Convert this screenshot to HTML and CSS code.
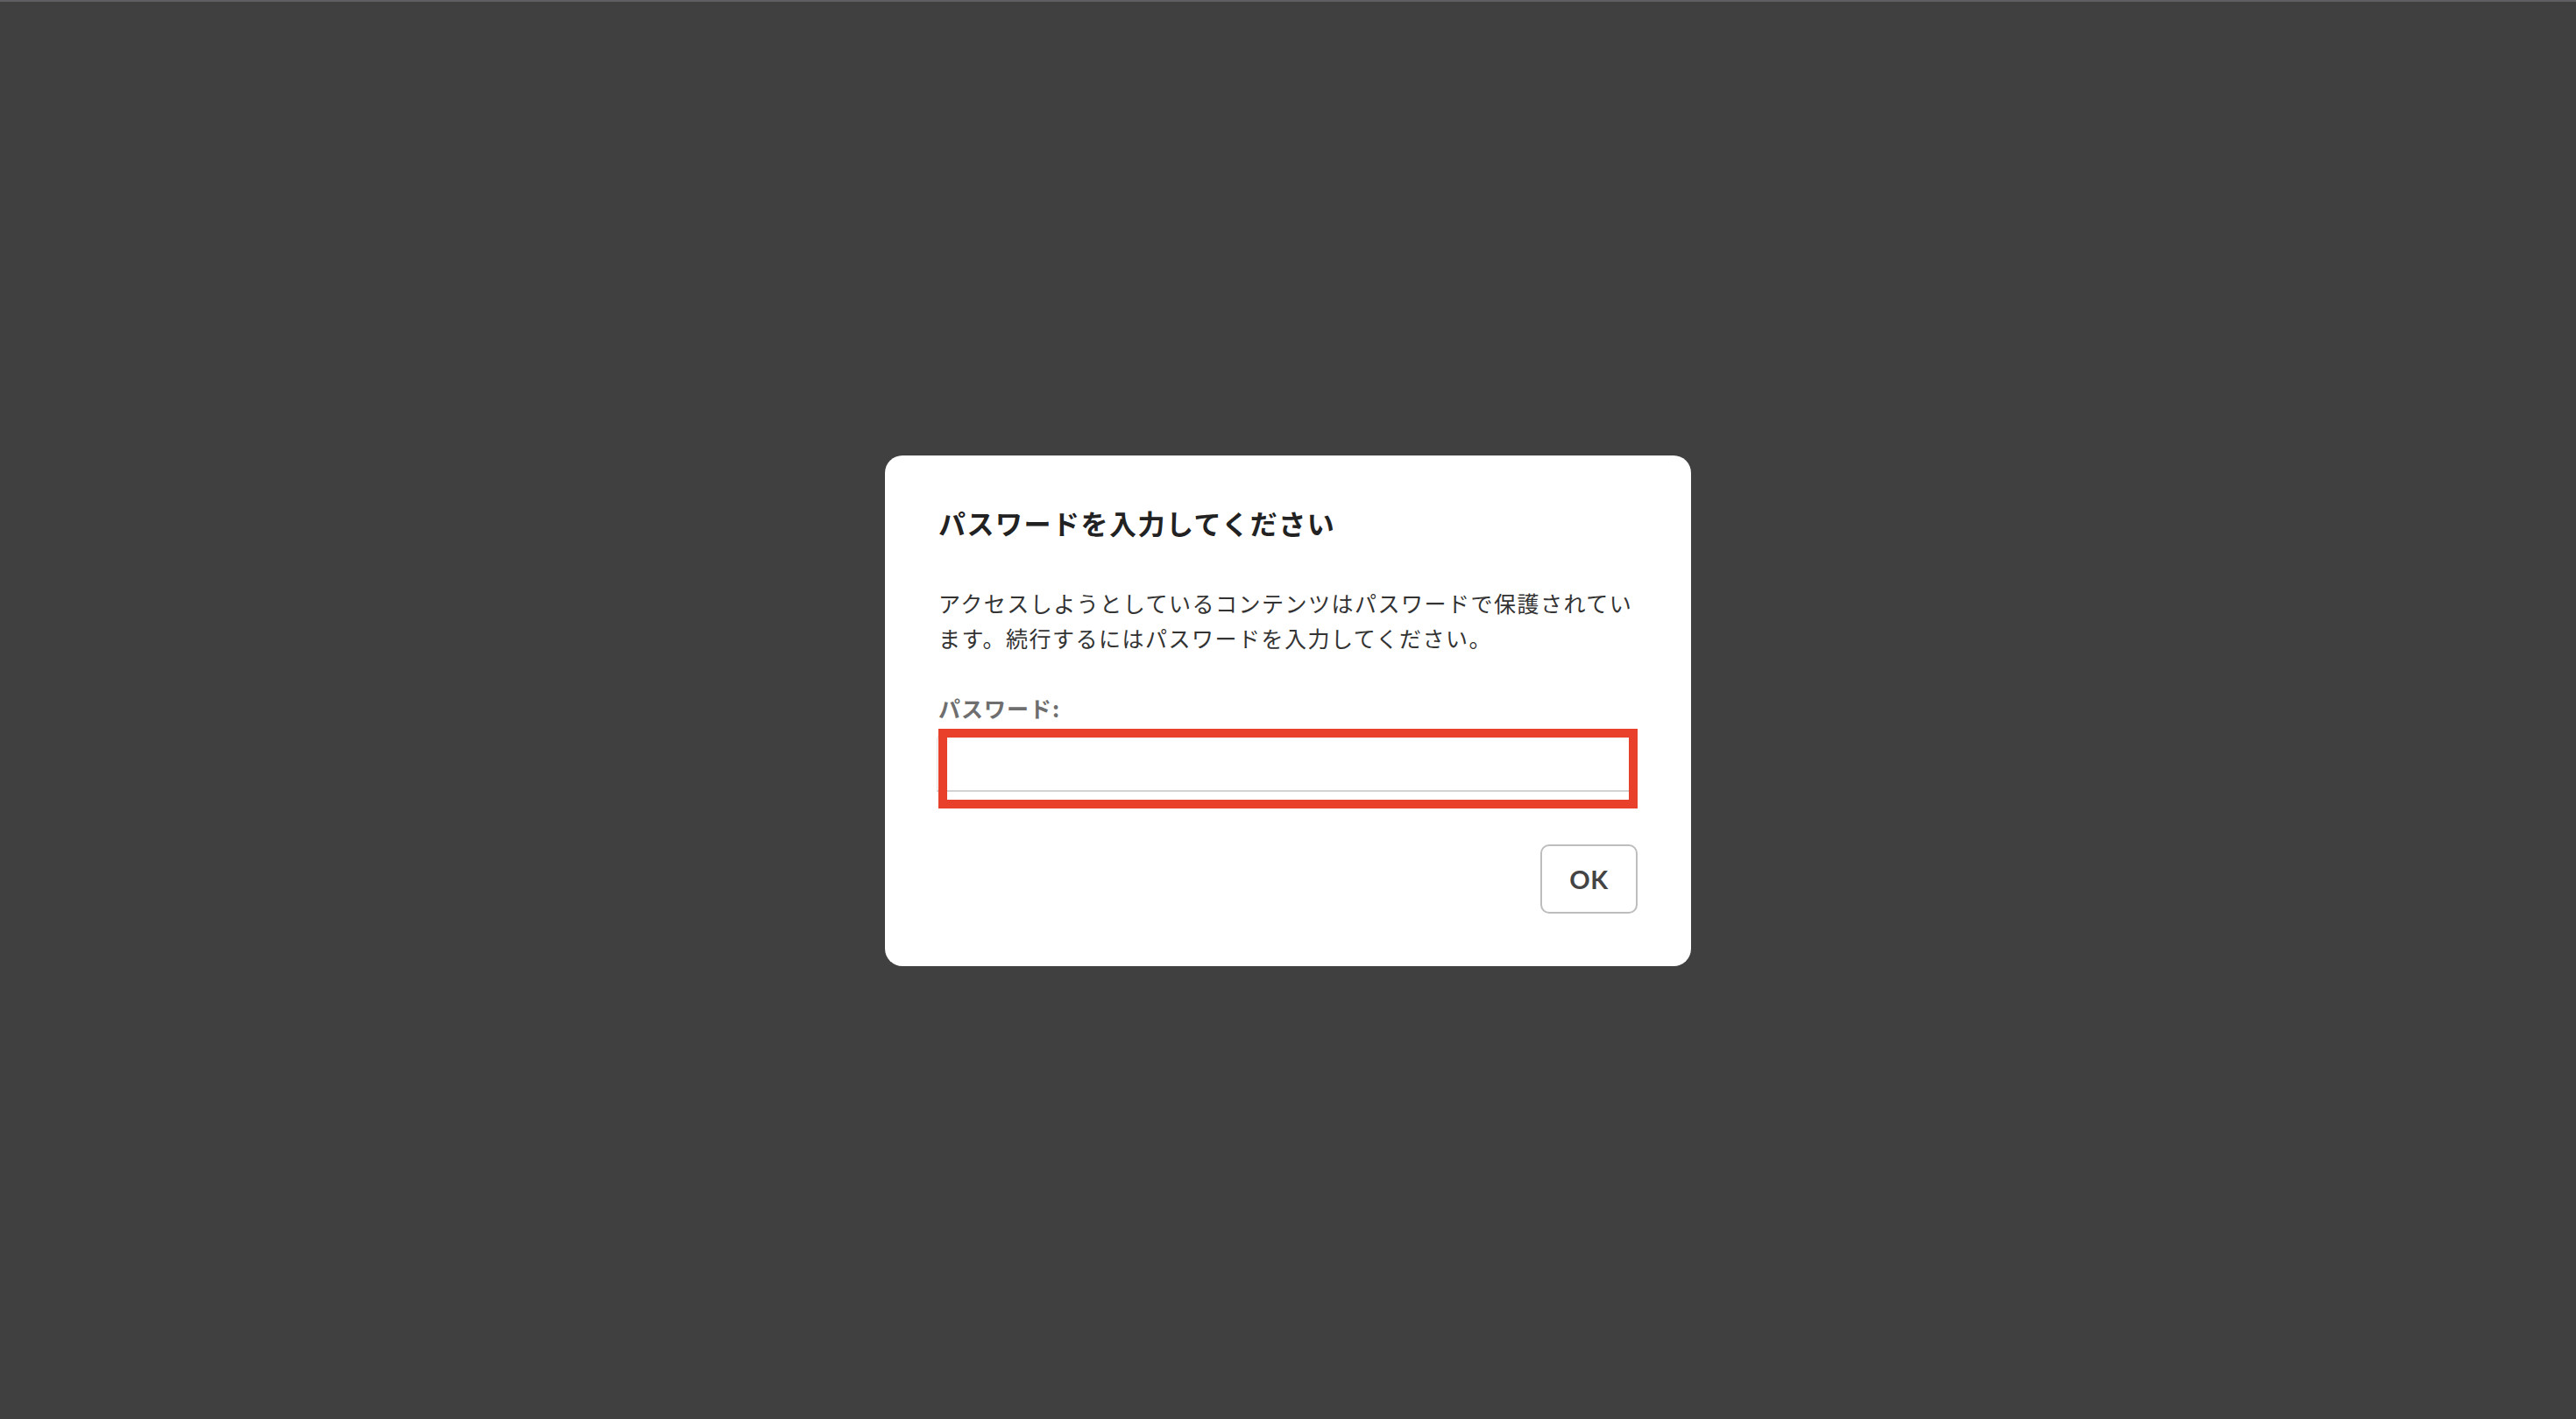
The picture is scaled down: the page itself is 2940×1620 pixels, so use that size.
FILE: index.html
```html
<!DOCTYPE html>
<html lang="ja">
<head>
<meta charset="utf-8">
<title>パスワードを入力してください</title>
<link rel="stylesheet" href="styles.css">
</head>
<body>
<div class="page">
  <div class="dialog">
    <h1 class="title">パスワードを入力してください</h1>
    <p class="message">アクセスしようとしているコンテンツはパスワードで保護されています。続行するにはパスワードを入力してください。</p>
    <label class="label" for="pw">パスワード:</label>
    <div class="field">
      <input class="input" id="pw" type="password">
      <div class="highlight"></div>
    </div>
    <div class="actions">
      <button class="ok" type="button">OK</button>
    </div>
  </div>
</div>
</body>
</html>
```
FILE: styles.css
```css
html, body {
  margin: 0;
  padding: 0;
  height: 100%;
}
body {
  background: #404040;
  border-top: 2px solid #5f5e63;
  box-sizing: border-box;
  font-family: "Noto Sans CJK JP", "Noto Sans", sans-serif;
}
.page {
  height: 100%;
  display: flex;
  align-items: center;
  justify-content: center;
}
.dialog {
  box-sizing: border-box;
  width: 920px;
  padding: 56px 61px 60px 61px;
  background: #ffffff;
  border-radius: 20px;
  display: flex;
  flex-direction: column;
}
.title {
  margin: 0;
  font-size: 31px;
  line-height: 42px;
  font-weight: 700;
  letter-spacing: 1.5px;
  color: #222222;
}
.message {
  margin: 50px 0 0 0;
  font-size: 25px;
  line-height: 40px;
  letter-spacing: 1.5px;
  color: #333333;
}
.label {
  margin-top: 44px;
  font-size: 25px;
  line-height: 32px;
  font-weight: 700;
  letter-spacing: 1px;
  color: #6e6e6e;
}
.field {
  position: relative;
  margin-top: 8px;
  height: 91px;
}
.input {
  display: block;
  box-sizing: border-box;
  margin: 6px 0 0 -2px;
  width: calc(100% - 6px);
  height: 66px;
  border: none;
  border-left: 1px solid #e2e2e2;
  border-bottom: 2px solid #d3d3d3;
  border-radius: 6px 6px 0 0;
  background: #ffffff;
  box-shadow: inset 0 8px 8px -6px rgba(0, 0, 0, 0.08);
  outline: none;
}
.highlight {
  position: absolute;
  inset: 0;
  border: 10px solid #e8402a;
  pointer-events: none;
}
.actions {
  display: flex;
  justify-content: flex-end;
  margin-top: 41px;
}
.ok {
  box-sizing: border-box;
  width: 111px;
  height: 79px;
  background: #ffffff;
  border: 2px solid #bdbdbd;
  border-radius: 10px;
  font-family: "Lato", "Open Sans", sans-serif;
  font-size: 29px;
  font-weight: 700;
  color: #444444;
  letter-spacing: 0.5px;
  padding: 0;
}
```
